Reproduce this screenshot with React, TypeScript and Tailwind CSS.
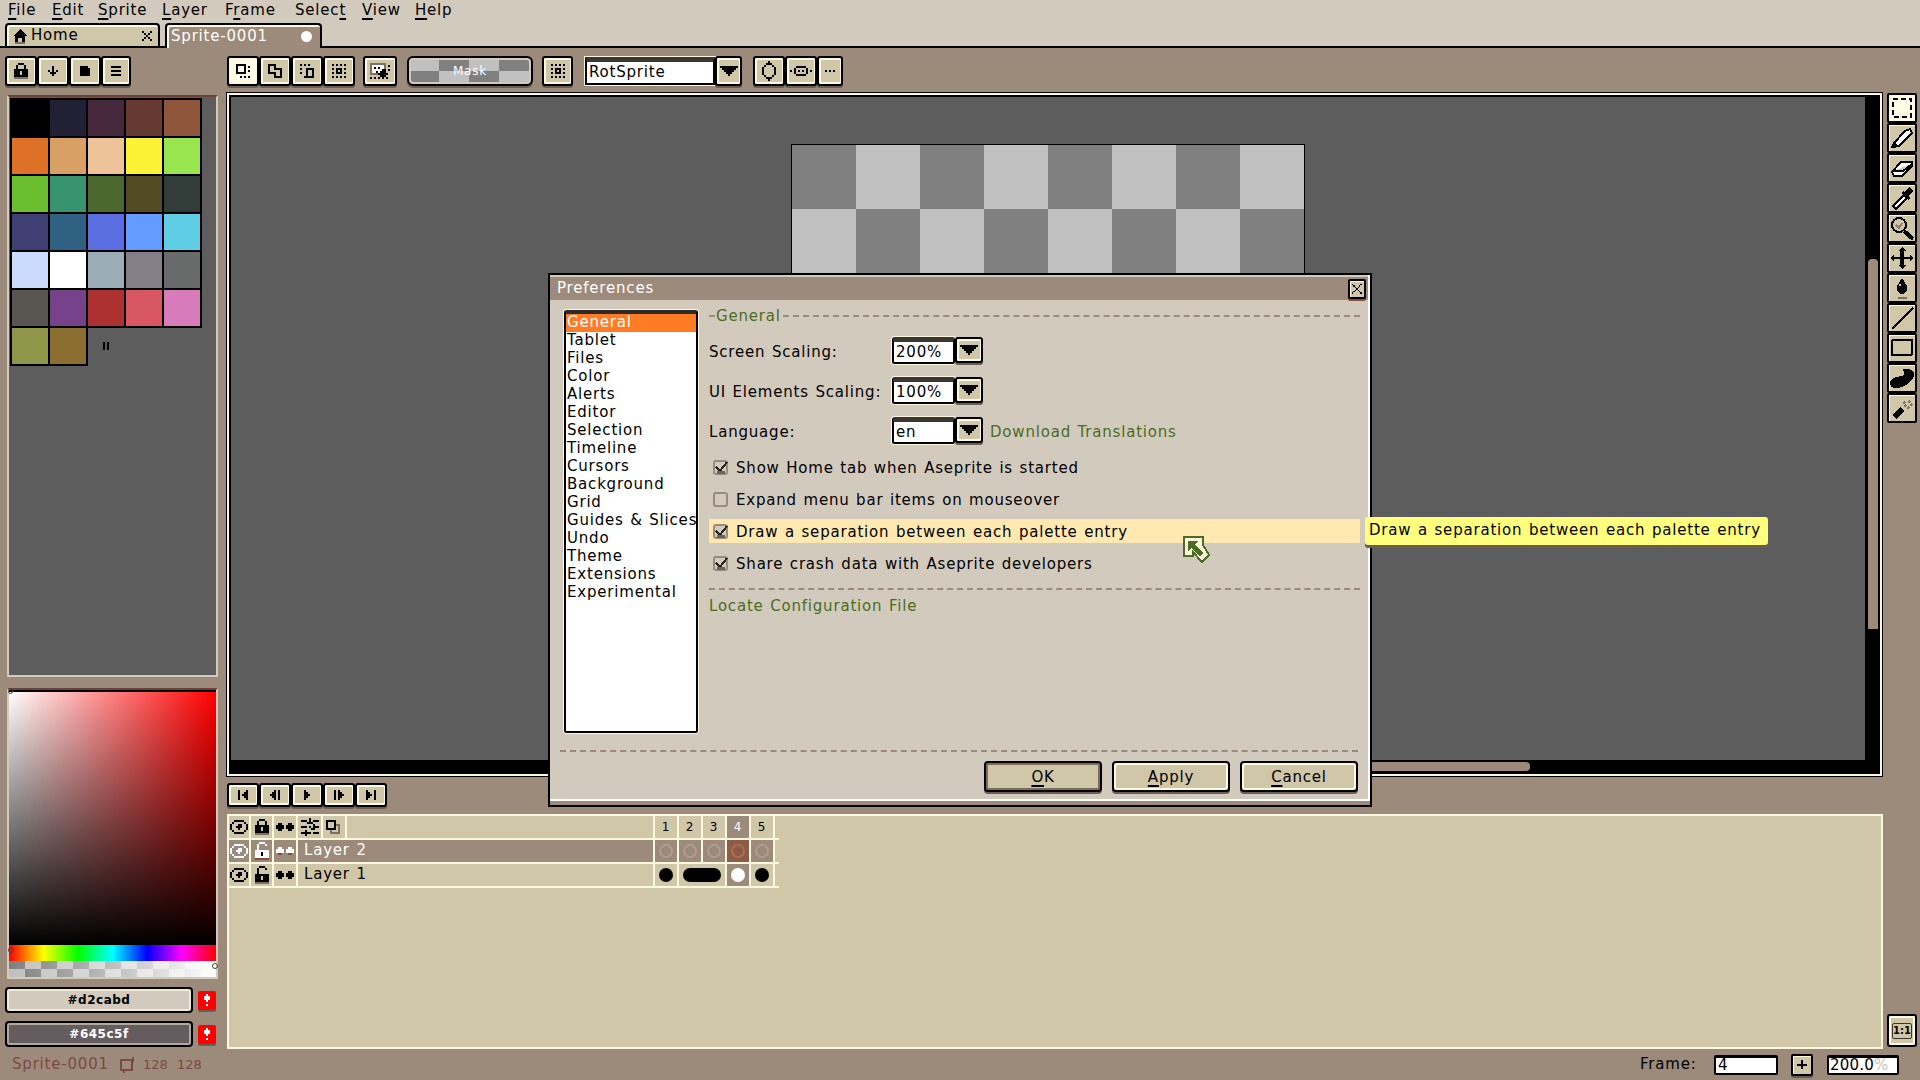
import React from "react";

const COLORS: Record<string, string> = {
  "#": "#000000",
  w: "#ffffff",
  g: "#7d7062",
  l: "#a89b8c",
  c: "#fdf9e0",
  r: "#8a4b3e",
  d: "#5d5d5d",
};

function Px({ rows, scale = 2 }: { rows: string[]; scale?: number }) {
  const w = rows[0].length;
  const h = rows.length;
  return (
    <svg width={w * scale} height={h * scale} viewBox={`0 0 ${w} ${h}`} shapeRendering="crispEdges">
      {rows.flatMap((row, y) =>
        [...row].map((c, x) => (COLORS[c] ? <rect key={`${x}-${y}`} x={x} y={y} width={1} height={1} fill={COLORS[c]} /> : null))
      )}
    </svg>
  );
}

const ICONS = {
  lock: ["..###..", ".#...#.", ".#...#.", "#######", "###.###", "###.###", "#######", "ggggggg"],
  down: ["..#..", "..#..", "#.#.#", ".###.", "..#.."],
  square: ["####.", "#####", "#####", "#####", "#####"],
  menu: ["#####", ".....", "#####", ".....", "#####"],
  selReplace: ["#####..", "#...#.#", "#...#..", "#...#.#", "#####..", ".......", "..#.#.#"],
  selAdd: ["####...", "#..#...", "#..####", "#.....#", "####..#", "...#..#", "...####"],
  selSub: ["#.#.#..", ".......", "#..####", "...#..#", "#..#..#", "...#..#", "..#####"],
  selInt: ["#.#.#.#", ".......", "#.###.#", "..#.#..", "#.###.#", ".......", "#.#.#.#"],
  pin: ["gggggggg..", "gwwwwwwg.#", "gw#w#wwg..", "gwwwww##.#", "gww#w###..", "gggg#####.", ".....###..", "#.#.#.#.#."],
  ovalV: ["...#...", "..###..", ".#...#.", "#.....#", "#.....#", "#.....#", "#.....#", ".#...#.", "..###..", "...#..."],
  ovalH: ["...#####...", "..#.....#..", "#.#.#.#.#.#", "..#.....#..", "...#####..."],
  dots: ["#.#.#"],
  arrow: ["#########", ".#######.", "..#####..", "...###...", "....#...."],
  first: ["#...#", "#..##", "#.###", "#..##", "#...#"],
  prev: ["..#.#", ".##.#", "###.#", ".##.#", "..#.#"],
  play: ["#..", "##.", "###", "##.", "#.."],
  next: ["#.#..", "#.##.", "#.###", "#.##.", "#.#.."],
  last: ["#...#", "##..#", "###.#", "##..#", "#...#"],
  eye: ["..#####..", ".#.....#.", "#...##..#", "#..###..#", "#...#...#", ".#.....#.", "..#####.."],
  eyeW: ["..wwwww..", ".w.....w.", "w...ww..w", "w..www..w", "w...w...w", ".w.....w.", "..wwwww.."],
  open: ["..###..", ".#...#.", ".#.....", ".#.....", "#######", "###.###", "###.###", "#######", "ggggggg"],
  openW: ["..www..", ".w...w.", ".w.....", ".w.....", "wwwwwww", "www#www", "www#www", "wwwwwww", "rrrrrrr"],
  onion: [".##...##.", "####.####", "####.####", ".##...##."],
  onionW: [".ww...ww.", "wwww.wwww", "wwww.wwww", ".rr...rr."],
  sliders: ["....#....", "###.#.###", "...###...", "......#..", "###.#.###", ".....##..", "..#......", "#####.###", "..#......"],
  blend: ["#####...", "#...#...", "#...#gg.", "#...#.g.", "#####.g.", "..g...g.", "..ggggg."],
  close: ["#.....#", ".#...#.", "..#.#..", "...#...", "..#.#..", ".#...#.", "#.....#"],
  plus: ["...#...", "...#...", "...#...", "#######", "...#...", "...#...", "...#..."],
  warn: ["..w..", ".www.", ".www.", "..w..", ".....", "..w.."],
};

const SWATCHES = [
  "#000000", "#222034", "#45283c", "#663931", "#8f563b",
  "#df7126", "#d9a066", "#eec39a", "#fbf236", "#99e550",
  "#6abe30", "#37946e", "#4b692f", "#524b24", "#323c39",
  "#3f3f74", "#306082", "#5b6ee1", "#639bff", "#5fcde4",
  "#cbdbfc", "#ffffff", "#9badb7", "#847e87", "#696a6a",
  "#595652", "#76428a", "#ac3232", "#d95763", "#d77bba",
  "#8f974a", "#8a6f30",
];

const PREFS = [
  "General", "Tablet", "Files", "Color", "Alerts", "Editor", "Selection", "Timeline",
  "Cursors", "Background", "Grid", "Guides & Slices", "Undo", "Theme", "Extensions", "Experimental",
];

const BEVEL = "border-2 border-black rounded-[3px] shadow-[inset_2px_2px_0_#fdf9e0,inset_-1px_-2px_0_#fdf9e0,0_2px_0_#6a5e52]";

function Btn({ w, active, children }: { w: string; active?: boolean; children?: React.ReactNode }) {
  return (
    <div className={`${w} h-[30px] flex items-center justify-center ${BEVEL} ${active ? "bg-[#fdfbe6]" : "bg-[#d0c7a8]"}`}>
      {children}
    </div>
  );
}

function Menu({ pre, u, post, w }: { pre?: string; u: string; post: string; w: string }) {
  return (
    <span className={`${w} shrink-0`}>
      {pre}
      <span className="underline decoration-2 underline-offset-[3px]">{u}</span>
      {post}
    </span>
  );
}

function Combo({ value }: { value: string }) {
  return (
    <div className="flex h-[28px]">
      <div className="w-[63px] h-[27px] border-2 border-black border-t-[5px] border-t-[#3a3530] rounded-[2px] bg-white pl-[2px] leading-[21px] outline-1 outline-[#fdf9e0]">
        {value}
      </div>
      <div className={`w-[28px] h-[26px] flex items-center justify-center bg-[#d0c7a8] ${BEVEL}`}>
        <Px rows={ICONS.arrow} />
      </div>
    </div>
  );
}

function Check({ label, checked, hot }: { label: string; checked: boolean; hot?: boolean }) {
  return (
    <div className={`h-[24px] flex items-center pl-[4px] ${hot ? "bg-[#ffe9b0]" : ""}`}>
      <div className="relative w-[15px] h-[15px] rounded-[3px] border-2 border-[#9c8a7b] bg-[#d2cabd]">
        {checked && (
          <svg className="absolute -left-[2px] -top-[3px]" width="18" height="16" viewBox="0 0 18 16" shapeRendering="crispEdges">
            <path d="M3 8 L7 12 L14 3" fill="none" stroke="#222" strokeWidth="2" />
            <rect x="4" y="12" width="8" height="3" fill="#6d6258" />
          </svg>
        )}
      </div>
      <span className="ml-[8px] pt-[2px]">{label}</span>
    </div>
  );
}

function FooterBtn({ u, rest, ok }: { u: string; rest: string; ok?: boolean }) {
  return (
    <div className={`w-[118px] h-[31px] flex items-center justify-center rounded-[4px] bg-[#d0c7a8] border-2 border-black ${ok ? "shadow-[inset_0_0_0_2px_#7d6c5c,0_2px_0_#6a5e52]" : "shadow-[inset_2px_2px_0_#fdf9e0,inset_-2px_-2px_0_#fdf9e0,0_2px_0_#6a5e52]"}`}>
      <span className="pt-[1px]">
        <span className="underline decoration-2 underline-offset-[3px]">{u}</span>
        {rest}
      </span>
    </div>
  );
}

function ToolIcon({ children }: { children: React.ReactNode }) {
  return (
    <svg width="26" height="24" viewBox="0 0 26 24" shapeRendering="crispEdges">
      {children}
    </svg>
  );
}

const TOOLS = [
  <rect key="r" x="4" y="3" width="18" height="18" fill="none" stroke="#000" strokeWidth="2" strokeDasharray="5 3" />,
  <g key="p"><path d="M5 17 L16 5 L21 3 L23 7 L10 20 L3 21 Z" fill="#fff" stroke="#000" strokeWidth="2" /><path d="M3 22 L10 20 L5 16 Z" fill="#000" /></g>,
  <path key="e" d="M3 16 L12 6 H23 V10 L13 20 H5 Z M4 15 H14 L23 8" fill="#fff" stroke="#000" strokeWidth="2" />,
  <g key="d"><path d="M4 20 L15 9 L18 12 L7 23 Z" fill="#fff" stroke="#000" strokeWidth="2" /><path d="M15 6 L20 1 L24 5 L19 10 L21 12 L19 14 L12 7 L14 5 Z" fill="#000" /></g>,
  <g key="z"><circle cx="10" cy="9" r="7" fill="#d0c7a8" stroke="#000" strokeWidth="2" /><path d="M7 9 L10 12 L13 7" fill="none" stroke="#8a7d6e" strokeWidth="2" /><path d="M15 15 L24 23" stroke="#000" strokeWidth="4" /></g>,
  <path key="m" d="M13 1 L17 5 H15 V11 H21 V9 L25 12 L21 15 V13 H15 V19 H17 L13 23 L9 19 H11 V13 H5 V15 L1 12 L5 9 V11 H11 V5 H9 Z" fill="#000" />,
  <g key="b"><path d="M13 2 L18 10 V15 L14 18 H11 L8 15 V10 Z" fill="#000" /><rect x="10" y="8" width="2" height="2" fill="#d0c7a8" /><rect x="9" y="21" width="9" height="2" fill="#7d7062" /></g>,
  <path key="l" d="M3 23 L24 2" stroke="#000" strokeWidth="2" />,
  <rect key="s" x="3" y="4" width="20" height="15" rx="1" fill="none" stroke="#000" strokeWidth="2" />,
  <path key="c" d="M1 16 C3 10 12 11 15 9 C16 7 15 5 13 4 C17 2 25 3 25 8 C25 15 15 22 7 22 C3 22 1 20 1 16 Z" fill="#000" />,
  <g key="a"><path d="M3 19 L11 11 L15 15 L7 23 Z" fill="#000" /><path d="M15 11 L17 9 M19 7 L21 5 M18 13 L20 11 M21 10 L23 8 M14 8 L16 6" stroke="#7d7062" strokeWidth="2" /></g>,
];

function FrameCell({ n, now }: { n: number; now?: boolean }) {
  return (
    <div className={`w-[24px] shrink-0 h-full flex items-center justify-center border-r-2 border-[#fdf9e0] text-[12px] ${now ? "bg-[#9c8a7b] text-white" : ""}`}>
      {n}
    </div>
  );
}

function Ring({ now }: { now?: boolean }) {
  return (
    <div className={`w-[24px] shrink-0 h-full flex items-center justify-center border-r-2 border-[#fdf9e0] ${now ? "bg-[#8e5a45]" : "bg-[#9c8a7b]"}`}>
      <div className={`w-[14px] h-[14px] rounded-full border-2 ${now ? "border-[#a5705a]" : "border-[#ad9e90]"}`} />
    </div>
  );
}

function Dot({ white }: { white?: boolean }) {
  return (
    <div className={`w-[24px] shrink-0 h-full flex items-center justify-center border-r-2 border-[#fdf9e0] ${white ? "bg-[#9c8a7b]" : ""}`}>
      <div className={`w-[14px] h-[14px] rounded-full ${white ? "bg-white" : "bg-black"}`} />
    </div>
  );
}

function IconCell({ rows, w, hot }: { rows: string[]; w: string; hot?: boolean }) {
  return (
    <div className={`${w} shrink-0 h-full flex items-center justify-center border-r-2 border-[#fdf9e0] ${hot ? "bg-[#9c8a7b]" : ""}`}>
      <Px rows={rows} />
    </div>
  );
}

export default function App() {
  return (
    <div className="relative w-[1920px] h-[1080px] overflow-hidden flex flex-col bg-[#9c8a7b] text-black text-[15px] tracking-[0.8px] [word-spacing:1px] [font-family:'DejaVu_Sans',sans-serif]">
      {/* menu */}
      <div className="h-[23px] shrink-0 flex items-center bg-[#d2cabd] pl-[8px] pb-[3px]">
        <Menu u="F" post="ile" w="w-[44px]" />
        <Menu u="E" post="dit" w="w-[46px]" />
        <Menu u="S" post="prite" w="w-[64px]" />
        <Menu u="L" post="ayer" w="w-[63px]" />
        <Menu pre="F" u="r" post="ame" w="w-[70px]" />
        <Menu pre="Selec" u="t" post="" w="w-[67px]" />
        <Menu u="V" post="iew" w="w-[53px]" />
        <Menu u="H" post="elp" w="w-[40px]" />
      </div>

      {/* tabs */}
      <div className="h-[25px] shrink-0 flex bg-[#d2cabd] border-b-2 border-black pl-[5px]">
        <div className="w-[155px] h-[23px] flex items-center border-2 border-b-0 border-black rounded-t-[4px] bg-[#d0c7a8] shadow-[inset_2px_2px_0_#fdf9e0] pl-[5px]">
          <svg width="16" height="16" viewBox="0 0 16 16" shapeRendering="crispEdges">
            <path d="M8 1 L15 8 H13 V14 H10 V10 H6 V14 H3 V8 H1 Z" fill="#000" />
            <rect x="3" y="14" width="10" height="2" fill="#7d7062" />
          </svg>
          <span className="ml-[3px] flex-1">Home</span>
          <span className="mr-[6px]"><Px rows={["#...#", ".#.#.", "..#..", ".#.#.", "#...#"]} /></span>
        </div>
        <div className="relative z-10 w-[157px] h-[25px] ml-[5px] flex items-center border-2 border-b-0 border-black rounded-t-[4px] bg-[#9c8a7b] shadow-[inset_2px_2px_0_#fdf9e0] pl-[4px] text-white">
          <span className="flex-1">Sprite-0001</span>
          <span className="w-[11px] h-[11px] mr-[8px] rounded-full bg-white" />
        </div>
      </div>

      {/* toolbar */}
      <div className="h-[45px] shrink-0 flex pt-[8px] pl-[5px]">
        <Btn w="w-[32px]"><Px rows={ICONS.lock} /></Btn>
        <Btn w="w-[32px]"><Px rows={ICONS.down} /></Btn>
        <Btn w="w-[32px]"><Px rows={ICONS.square} /></Btn>
        <Btn w="w-[30px]"><Px rows={ICONS.menu} /></Btn>
        <div className="w-[96px]" />
        <Btn w="w-[32px]" active><Px rows={ICONS.selReplace} /></Btn>
        <Btn w="w-[32px]"><Px rows={ICONS.selAdd} /></Btn>
        <Btn w="w-[32px]"><Px rows={ICONS.selSub} /></Btn>
        <Btn w="w-[32px]"><Px rows={ICONS.selInt} /></Btn>
        <div className="w-[8px]" />
        <Btn w="w-[34px]"><Px rows={ICONS.pin} /></Btn>
        <div className="w-[10px]" />
        <div className="w-[126px] h-[30px] rounded-[6px] border-2 border-black flex items-center justify-center text-white text-[12px] shadow-[inset_0_0_0_2px_#d2cabd,0_2px_0_#6a5e52] bg-[conic-gradient(#808080_25%,#c0c0c0_0_50%,#808080_0_75%,#c0c0c0_0)] bg-[length:60px_26px]">
          Mask
        </div>
        <div className="w-[9px]" />
        <Btn w="w-[31px]"><Px rows={ICONS.selInt} /></Btn>
        <div className="w-[12px]" />
        <div className="w-[130px] h-[28px] mt-[1px] border-2 border-black border-t-[5px] border-t-[#3a3530] bg-white pl-[2px] leading-[21px] outline-1 outline-[#fdf9e0]">RotSprite</div>
        <Btn w="w-[27px]"><Px rows={ICONS.arrow} /></Btn>
        <div className="w-[11px]" />
        <Btn w="w-[32px]"><Px rows={ICONS.ovalV} /></Btn>
        <Btn w="w-[32px]"><Px rows={ICONS.ovalH} /></Btn>
        <Btn w="w-[26px]"><Px rows={ICONS.dots} /></Btn>
      </div>

      {/* workspace */}
      <div className="h-[956px] shrink-0 flex">
        {/* left column */}
        <div className="w-[227px] shrink-0 flex flex-col">
          <div className="ml-[7px] mt-[2px] w-[211px] h-[582px] border-2 border-[#d2cabd] border-t-[#6d4038] bg-[#5d5d5d] pl-[3px] pt-[3px]">
            <div className="grid grid-cols-[repeat(5,36px)] auto-rows-[36px] gap-[2px]">
              {SWATCHES.map((c) => (
                <div key={c} className="shadow-[0_0_0_2px_#000]" style={{ backgroundColor: c }} />
              ))}
              <div className="flex items-center justify-center"><Px rows={["#.#", "#.#", "#.#", "#.#"]} /></div>
            </div>
          </div>
          <div className="relative ml-[7px] mt-[11px] w-[211px] h-[291px] border-2 border-[#d2cabd] border-t-[#6d4038] flex flex-col">
            <div className="flex-1 bg-[linear-gradient(to_top,#000,transparent),linear-gradient(to_right,#fff,#f00)] border-t-2 border-black" />
            <div className="h-[16px] bg-[linear-gradient(to_right,#f00,#ff0,#0f0,#0ff,#00f,#f0f,#f00)]" />
            <div className="h-[16px] bg-[linear-gradient(to_right,rgba(255,255,255,0),#fff),conic-gradient(#c0c0c0_25%,#808080_0_50%,#c0c0c0_0_75%,#808080_0)] bg-[length:100%_100%,32px_16px]" />
            <div className="absolute -left-[1px] -top-[1px] w-[5px] h-[5px] rounded-full border border-[#444]" />
            <div className="absolute -left-[1px] top-[257px] w-[6px] h-[6px] rounded-full border border-[#444]" />
            <div className="absolute -right-[2px] top-[273px] w-[6px] h-[6px] rounded-full border border-[#444]" />
          </div>
          <div className="ml-[5px] mt-[8px] flex items-center">
            <div className="w-[188px] h-[26px] rounded-[4px] border-2 border-black bg-[#d2cabd] shadow-[inset_0_0_0_2px_#efe9d6] flex items-center justify-center font-bold text-[12px] tracking-[0.5px]">#d2cabd</div>
            <div className="ml-[5px] w-[18px] h-[19px] rounded-[2px] bg-[#ff0000] shadow-[0_2px_0_#6a5e52] flex items-center justify-center"><Px rows={ICONS.warn} /></div>
          </div>
          <div className="ml-[5px] mt-[8px] flex items-center">
            <div className="w-[188px] h-[26px] rounded-[4px] border-2 border-black bg-[#645c5f] shadow-[inset_0_0_0_2px_#b0a99c] flex items-center justify-center font-bold text-white text-[12px] tracking-[0.5px]">#645c5f</div>
            <div className="ml-[5px] w-[18px] h-[19px] rounded-[2px] bg-[#ff0000] shadow-[0_2px_0_#6a5e52] flex items-center justify-center"><Px rows={ICONS.warn} /></div>
          </div>
        </div>

        {/* center column */}
        <div className="w-[1657px] shrink-0 flex flex-col">
          <div className="w-[1655px] h-[683px] border-2 border-[#fdf9e0] shadow-[0_0_0_1px_#000] flex flex-col overflow-hidden">
            <div className="flex-1 flex min-h-0 border-2 border-black border-b-0 border-r-0">
              <div className="flex-1 bg-[#5d5d5d] pt-[47px] pl-[560px] overflow-hidden">
                <div className="w-[514px] h-[514px] border border-black bg-[conic-gradient(#c0c0c0_25%,#808080_0_50%,#c0c0c0_0_75%,#808080_0)] bg-[length:128px_128px]" />
              </div>
              <div className="w-[15px] bg-black pt-[162px] pl-[3px]">
                <div className="w-[10px] h-[370px] rounded-t-[4px] bg-[#9c8a7b]" />
              </div>
            </div>
            <div className="h-[14px] bg-black shrink-0 pl-[1000px] pt-[2px]">
              <div className="w-[301px] h-[9px] rounded-r-[4px] bg-[#9c8a7b]" />
            </div>
          </div>
          <div className="mt-[7px] h-[24px] flex">
            {["first", "prev", "play", "next", "last"].map((k) => (
              <div key={k} className={`w-[32px] h-[24px] flex items-center justify-center bg-[#d0c7a8] ${BEVEL}`}>
                <Px rows={ICONS[k as keyof typeof ICONS]} />
              </div>
            ))}
          </div>
          <div className="mt-[7px] w-[1656px] h-[235px] bg-[#d0c7a8] border-2 border-[#fdf9e0]">
            <div className="h-[24px] w-[550px] flex border-b-2 border-[#fdf9e0]">
              <IconCell w="w-[22px]" rows={ICONS.eye} />
              <IconCell w="w-[23px]" rows={ICONS.lock} />
              <IconCell w="w-[24px]" rows={ICONS.onion} />
              <IconCell w="w-[25px]" rows={ICONS.sliders} />
              <IconCell w="w-[24px]" rows={ICONS.blend} />
              <div className="w-[308px] shrink-0 border-r-2 border-[#fdf9e0]" />
              <FrameCell n={1} /><FrameCell n={2} /><FrameCell n={3} /><FrameCell n={4} now /><FrameCell n={5} />
            </div>
            <div className="h-[24px] w-[550px] flex border-b-2 border-[#fdf9e0]">
              <IconCell w="w-[22px]" rows={ICONS.eyeW} hot />
              <IconCell w="w-[23px]" rows={ICONS.openW} hot />
              <IconCell w="w-[24px]" rows={ICONS.onionW} hot />
              <div className="w-[357px] shrink-0 h-full bg-[#9c8a7b] text-white pl-[6px] leading-[21px] border-r-2 border-[#fdf9e0]">Layer 2</div>
              <Ring /><Ring /><Ring /><Ring now /><Ring />
            </div>
            <div className="h-[24px] w-[550px] flex border-b-2 border-[#fdf9e0]">
              <IconCell w="w-[22px]" rows={ICONS.eye} />
              <IconCell w="w-[23px]" rows={ICONS.open} />
              <IconCell w="w-[24px]" rows={ICONS.onion} />
              <div className="w-[357px] shrink-0 h-full pl-[6px] leading-[21px] border-r-2 border-[#fdf9e0]">Layer 1</div>
              <Dot />
              <div className="w-[48px] shrink-0 h-full flex items-center justify-center border-r-2 border-[#fdf9e0]">
                <div className="w-[38px] h-[14px] rounded-full bg-black" />
              </div>
              <Dot white /><Dot />
            </div>
          </div>
        </div>

        {/* tools column */}
        <div className="ml-[3px] w-[30px] shrink-0 flex flex-col justify-between">
          <div className="flex flex-col">
            {TOOLS.map((icon, i) => (
              <div key={i} className={`w-[30px] h-[30px] flex items-center justify-center border-2 border-black rounded-[2px] ${i === 0 ? "bg-[#fdfbe6]" : "bg-[#d0c7a8]"} shadow-[inset_1px_1px_0_#fdf9e0]`}>
                <ToolIcon>{icon}</ToolIcon>
              </div>
            ))}
          </div>
          <div className="mb-[2px] w-[30px] h-[33px] flex items-center justify-center border-2 border-black rounded-[3px] bg-[#d0c7a8] shadow-[inset_0_0_0_2px_#fdf9e0] text-[10px] font-bold tracking-normal">
            <span className="border border-[#3a3530] rounded-[2px] leading-[14px]">1:1</span>
          </div>
        </div>
      </div>

      {/* status bar */}
      <div className="flex-1 flex items-center pl-[12px]">
        <span className="w-[108px] text-[#7d4a3f]">Sprite-0001</span>
        <svg width="16" height="16" viewBox="0 0 16 16" shapeRendering="crispEdges">
          <path d="M1 3 H12 V13 H1 Z" fill="none" stroke="#7d4a3f" strokeWidth="2" />
          <path d="M13 0 V5 M4 13 V16" stroke="#7d4a3f" strokeWidth="2" />
        </svg>
        <span className="ml-[7px] w-[34px] text-[#7d4a3f] text-[13px] tracking-normal">128</span>
        <span className="w-[1463px] text-[#7d4a3f] text-[13px] tracking-normal">128</span>
        <span className="w-[74px]">Frame:</span>
        <div className="w-[64px] h-[20px] border-2 border-black rounded-[2px] border-t-[3px] bg-white leading-[14px] pl-[2px]">4</div>
        <div className="ml-[13px] w-[22px] h-[22px] flex items-center justify-center bg-[#d0c7a8] border-2 border-black rounded-[2px] shadow-[inset_1px_1px_0_#fdf9e0,0_2px_0_#6a5e52]"><Px rows={ICONS.plus} scale={1.4} /></div>
        <div className="ml-[14px] w-[72px] h-[20px] border-2 border-black rounded-[2px] border-t-[3px] bg-white leading-[14px] pl-[1px] whitespace-nowrap tracking-[0.2px]">200.0<span className="text-[#c8c2b8]">%</span></div>
      </div>

      {/* preferences dialog */}
      <div className="absolute left-[548px] top-[273px] w-[824px] h-[534px] border-2 border-black bg-[#9c8a7b] flex flex-col">
        <div className="h-[526px] shrink-0 flex flex-col border-b-2 border-r-2 border-white bg-[#d2cabd]">
          <div className="relative h-[25px] shrink-0 bg-[#9c8a7b] text-white pl-[7px] leading-[22px] border-t-2 border-[#d2cabd]">
            Preferences
            <div className="absolute right-[2px] top-[2px] w-[18px] h-[20px] flex items-center justify-center bg-[#d0c7a8] border-2 border-black rounded-[2px] shadow-[inset_1px_1px_0_#fdf9e0,0_2px_0_#8a4b3e]">
              <Px rows={ICONS.close} scale={1.4} />
            </div>
          </div>
          <div className="flex flex-1 min-h-0 pl-[14px] pt-[10px]">
            <div className="w-[134px] h-[423px] shrink-0 border-2 border-black border-t-[4px] border-t-[#2f2b28] bg-white rounded-[2px] outline-1 outline-[#fdf9e0]">
              {PREFS.map((p, i) => (
                <div key={p} className={`h-[18px] leading-[17px] pl-[1px] whitespace-nowrap ${i === 0 ? "bg-[#ff7c24] text-white" : ""}`}>{p}</div>
              ))}
            </div>
            <div className="ml-[11px] w-[651px] shrink-0 flex flex-col">
              <div className="h-[18px] flex items-center text-[#4a6d22] mt-[-3px]">
                <span className="mr-[1px] border-t-2 border-dashed border-[#9c8a7b] w-[6px]" />
                General
                <span className="ml-[2px] flex-1 border-t-2 border-dashed border-[#9c8a7b]" />
              </div>
              <div className="mt-[12px] flex flex-col gap-[12px]">
                <div className="h-[28px] flex items-center">
                  <span className="w-[183px] pt-[2px]">Screen Scaling:</span>
                  <Combo value="200%" />
                </div>
                <div className="h-[28px] flex items-center">
                  <span className="w-[183px] pt-[2px]">UI Elements Scaling:</span>
                  <Combo value="100%" />
                </div>
                <div className="h-[28px] flex items-center">
                  <span className="w-[183px] pt-[2px]">Language:</span>
                  <Combo value="en" />
                  <span className="ml-[7px] pt-[2px] text-[#4a6d22]">Download Translations</span>
                </div>
              </div>
              <div className="mt-[10px] flex flex-col gap-[8px]">
                <Check label="Show Home tab when Aseprite is started" checked />
                <Check label="Expand menu bar items on mouseover" checked={false} />
                <Check label="Draw a separation between each palette entry" checked hot />
                <Check label="Share crash data with Aseprite developers" checked />
              </div>
              <div className="mt-[13px] border-t-2 border-dashed border-[#9c8a7b]" />
              <div className="mt-[7px] h-[18px] leading-[18px] text-[#4a6d22]">Locate Configuration File</div>
            </div>
          </div>
          <div className="ml-[10px] mr-[10px] border-t-2 border-dashed border-[#9c8a7b]" />
          <div className="h-[47px] shrink-0 pt-[9px] pr-[10px] flex justify-end gap-[10px]">
            <FooterBtn u="O" rest="K" ok />
            <FooterBtn u="A" rest="pply" />
            <FooterBtn u="C" rest="ancel" />
          </div>
        </div>
      </div>

      {/* tooltip */}
      <div className="absolute left-[1365px] top-[517px] w-[403px] h-[28px] pl-[4px] leading-[27px] whitespace-nowrap rounded-[3px] bg-[#ffff7d] shadow-[0_3px_0_#6a5e52]">
        Draw a separation between each palette entry
      </div>

      {/* cursor */}
      <svg className="absolute left-[1183px] top-[536px]" width="27" height="27" viewBox="0 0 27 27" shapeRendering="crispEdges">
        <path d="M1 1 H20 V9 L26 19 L19 26 L10 16 V20 H1 Z" fill="#fdf9e0" stroke="#4a6d22" strokeWidth="2" />
        <path d="M5 5 H15 L12 8 L20 17 L17 20 L8 12 L5 15 Z" fill="#4a6d22" />
      </svg>
    </div>
  );
}
